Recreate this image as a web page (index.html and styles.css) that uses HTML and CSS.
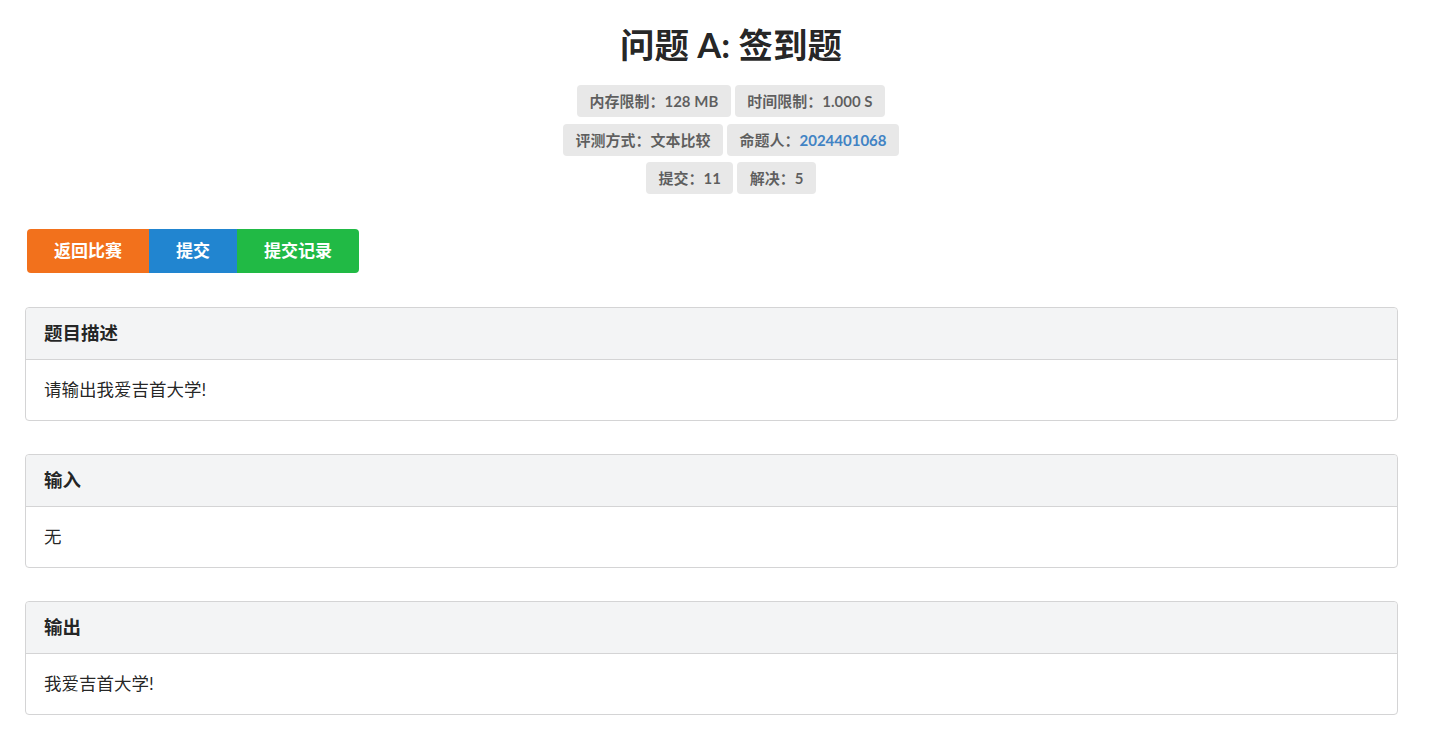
FILE: index.html
```html
<!DOCTYPE html>
<html lang="zh-CN">
<head>
    <meta charset="UTF-8">
    <meta name="viewport" content="width=device-width, initial-scale=1.0">
    <title>问题 A: 签到题</title>
    <link rel="stylesheet" href="styles.css">
</head>
<body>
    <div class="page">
        <div class="problem-head">
            <h1 class="problem-title">问题 A: 签到题</h1>
            <div class="label-row">
                <span class="label">内存限制：128 MB</span>
                <span class="label">时间限制：1.000 S</span>
            </div>
            <div class="label-row">
                <span class="label">评测方式：文本比较</span>
                <span class="label">命题人：<a class="user-link" href="#">2024401068</a></span>
            </div>
            <div class="label-row">
                <span class="label">提交：11</span>
                <span class="label">解决：5</span>
            </div>
        </div>

        <div class="btn-group">
            <a class="btn orange" href="#">返回比赛</a>
            <a class="btn blue" href="#">提交</a>
            <a class="btn green" href="#">提交记录</a>
        </div>

        <div class="panel">
            <div class="panel-header">题目描述</div>
            <div class="panel-body">请输出我爱吉首大学!</div>
        </div>

        <div class="panel">
            <div class="panel-header">输入</div>
            <div class="panel-body">无</div>
        </div>

        <div class="panel">
            <div class="panel-header">输出</div>
            <div class="panel-body">我爱吉首大学!</div>
        </div>
    </div>
</body>
</html>
```

FILE: styles.css
```css
body {
    margin: 0;
    font-family: Lato, "Noto Sans CJK SC", "Helvetica Neue", Arial, sans-serif;
    font-size: 14px;
    color: rgba(0,0,0,0.87);
    background: #fff;
}
.page {
    padding: 23px 49px 30px 25px;
}
.problem-head {
    text-align: center;
    padding-left: 15px;
    margin-right: -24px;
}
.problem-title {
    margin: 0 0 18px 0;
    font-size: 34.5px;
    font-weight: 700;
    line-height: 44px;
}
.label-row {
    display: flex;
    justify-content: center;
    gap: 4px;
    margin-bottom: 6.5px;
}
.label {
    display: inline-block;
    background: #e8e8e8;
    color: rgba(0,0,0,0.6);
    font-weight: 700;
    font-size: 15px;
    line-height: 20px;
    padding: 6px 12.5px;
    border-radius: 4px;
}
.user-link {
    color: #4183c4;
    text-decoration: none;
}
.btn-group {
    display: flex;
    margin: 35px 0 34px 2px;
}
.btn {
    display: block;
    color: #fff;
    font-weight: 700;
    font-size: 17px;
    line-height: 20px;
    padding: 12px 27px;
    text-decoration: none;
}
.btn.orange {
    background: #f2711c;
    border-radius: 4px 0 0 4px;
}
.btn.blue {
    background: #2185d0;
}
.btn.green {
    background: #21ba45;
    border-radius: 0 4px 4px 0;
}
.panel {
    border: 1px solid #d4d4d5;
    border-radius: 4px;
    margin-bottom: 33px;
}
.panel-header {
    background: #f3f4f5;
    border-bottom: 1px solid #d4d4d5;
    border-radius: 4px 4px 0 0;
    padding: 14px 18px;
    font-size: 18.5px;
    font-weight: 700;
    line-height: 23px;
}
.panel-body {
    padding: 18px 18px;
    font-size: 17.5px;
    line-height: 24px;
}
```
